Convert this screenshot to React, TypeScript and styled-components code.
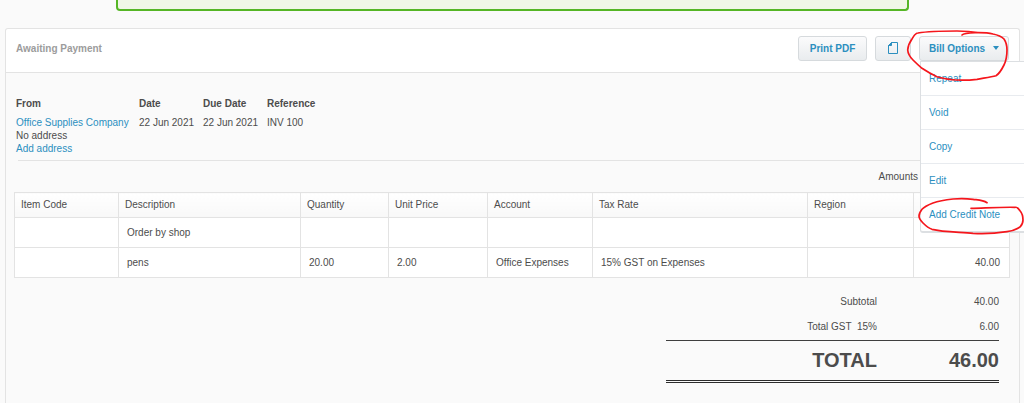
import React from "react";
import styled, { createGlobalStyle } from "styled-components";

const ink = "#4c4c4c";
const blue = "#2b8fbf";
const line = "#e3e3e3";

const GlobalStyle = createGlobalStyle`
  * { box-sizing: border-box; }
  body {
    margin: 0;
    background: #fafafa;
    color: ${ink};
    font: 10px/13px "Liberation Sans", Arial, sans-serif;
    overflow-x: hidden;
  }
`;

const Page = styled.div`
  position: relative;
  overflow: hidden;
  padding: 0 4px 0 5px;
`;

const Notice = styled.div`
  height: 11px;
  margin: 0 111px 17px;
  border: 2px solid #55b625;
  border-top: 0;
  border-radius: 0 0 4px 4px;
  background: #f0f7e6;
`;

const Panel = styled.section`
  border: 1px solid ${line};
  border-bottom: 0;
  border-radius: 3px 3px 0 0;
  background: #fafafa;
`;

const PanelHeader = styled.header`
  display: flex;
  align-items: center;
  justify-content: space-between;
  height: 44px;
  padding: 0 10px 4px;
  border-bottom: 1px solid ${line};
  border-radius: 3px 3px 0 0;
  background: #fff;
`;

const Status = styled.h1`
  margin: 0;
  color: #9c9c9c;
  font-size: 10px;
  line-height: 13px;
`;

const Actions = styled.div`
  display: flex;
  gap: 8px;
`;

const Button = styled.button<{ $width: number }>`
  display: flex;
  align-items: center;
  justify-content: center;
  gap: 8px;
  width: ${(p) => p.$width}px;
  height: 25px;
  padding: 0 0 1px;
  border: 1px solid #d6dadd;
  border-radius: 3px;
  background: linear-gradient(#fbfbfc, #e9ecee);
  color: ${blue};
  font: bold 10px/13px "Liberation Sans", Arial, sans-serif;
`;

const MenuAnchor = styled.div`
  position: relative;
`;

const Menu = styled.ul`
  position: absolute;
  top: 25px;
  left: 1px;
  width: 130px;
  margin: 0;
  padding: 0;
  border: 1px solid #dcdfe2;
  border-bottom-width: 2px;
  border-radius: 0 0 3px 3px;
  background: #fff;
  list-style: none;
`;

const MenuItem = styled.li`
  height: 34px;
  border-bottom: 1px solid #e8ebef;
  &:last-child {
    height: 33px;
    border-bottom: 0;
  }
`;

const MenuLink = styled.a`
  display: block;
  padding: 10px 8px;
  color: ${blue};
  text-decoration: none;
`;

const Body = styled.div`
  padding: 24px 9px 21px 8px;
`;

const Details = styled.dl`
  display: flex;
  gap: 9px;
  margin: 0 0 5px 2px;
`;

const Detail = styled.div<{ $width: number }>`
  width: ${(p) => p.$width}px;
  white-space: nowrap;
`;

const Term = styled.dt`
  margin-bottom: 6px;
  font-weight: bold;
`;

const Value = styled.dd`
  margin: 0;
`;

const TextLink = styled.a`
  color: ${blue};
  text-decoration: none;
`;

const Rule = styled.hr`
  height: 1px;
  margin: 0 0 0 4px;
  border: 0;
  background: ${line};
`;

const AmountsNote = styled.p`
  margin: 9px 0;
  padding-right: 92px;
  text-align: right;
`;

const Items = styled.table`
  width: 100%;
  table-layout: fixed;
  border-collapse: collapse;
  background: #fff;
`;

const HeadCell = styled.th`
  height: 25px;
  padding: 0 6px 2px;
  border: 1px solid ${line};
  background: linear-gradient(#fff, #f8f8f8);
  font-weight: normal;
  text-align: left;
`;

const Cell = styled.td<{ $right?: boolean }>`
  height: 30px;
  padding: 0 9px 0 8px;
  border: 1px solid ${line};
  text-align: ${(p) => (p.$right ? "right" : "left")};
`;

const Totals = styled.dl`
  width: 333px;
  margin: 11px 11px 0 auto;
`;

const TotalRow = styled.div`
  display: grid;
  grid-template-columns: 1fr 122px;
  padding: 6px 0;
  text-align: right;
  white-space: pre;
`;

const GrandTotal = styled(TotalRow)`
  margin-top: 1px;
  padding: 8px 0;
  border-top: 1px solid #3f3f3f;
  border-bottom: 3px double #2d2d2d;
  font-size: 20px;
  font-weight: bold;
  line-height: 23px;
`;

const TotalLabel = styled.dt``;

const Markup = styled.svg`
  position: absolute;
  top: 0;
  right: 0;
  pointer-events: none;
`;

const options = ["Repeat", "Void", "Copy", "Edit", "Add Credit Note"];

const columns = [
  { name: "Item Code", width: 104 },
  { name: "Description" },
  { name: "Quantity", width: 88 },
  { name: "Unit Price", width: 99 },
  { name: "Account", width: 105 },
  { name: "Tax Rate", width: 215 },
  { name: "Region", width: 106 },
  { name: "", width: 96 },
];

const rows = [
  ["", "Order by shop", "", "", "", "", "", ""],
  ["", "pens", "20.00", "2.00", "Office Expenses", "15% GST on Expenses", "", "40.00"],
];

export default function App() {
  return (
    <Page>
      <GlobalStyle />
      <Notice />
      <Panel>
        <PanelHeader>
          <Status>Awaiting Payment</Status>
          <Actions>
            <Button $width={69}>Print PDF</Button>
            <Button $width={36} aria-label="Files">
              <svg width="10" height="12" viewBox="0 0 10 12" fill="none" stroke={blue}>
                <path d="M3.5 .5H9.5V11.5H.5V3.5Z" />
                <path d="M3.5 .5V3.5H.5Z" fill={blue} />
              </svg>
            </Button>
            <MenuAnchor>
              <Button $width={90} aria-expanded="true">
                Bill Options
                <svg width="6" height="4" viewBox="0 0 6 4" fill={blue}>
                  <path d="M0 0H6L3 4Z" />
                </svg>
              </Button>
              <Menu>
                {options.map((name) => (
                  <MenuItem key={name}>
                    <MenuLink href="#">{name}</MenuLink>
                  </MenuItem>
                ))}
              </Menu>
            </MenuAnchor>
          </Actions>
        </PanelHeader>
        <Body>
          <Details>
            <Detail $width={114}>
              <Term>From</Term>
              <Value><TextLink href="#">Office Supplies Company</TextLink></Value>
              <Value>No address</Value>
              <Value><TextLink href="#">Add address</TextLink></Value>
            </Detail>
            <Detail $width={55}>
              <Term>Date</Term>
              <Value>22 Jun 2021</Value>
            </Detail>
            <Detail $width={55}>
              <Term>Due Date</Term>
              <Value>22 Jun 2021</Value>
            </Detail>
            <Detail $width={55}>
              <Term>Reference</Term>
              <Value>INV 100</Value>
            </Detail>
          </Details>
          <Rule />
          <AmountsNote>Amounts</AmountsNote>
          <Items>
            <colgroup>
              {columns.map((c, i) => <col key={i} width={c.width} />)}
            </colgroup>
            <thead>
              <tr>
                {columns.map((c, i) => <HeadCell key={i} scope="col">{c.name}</HeadCell>)}
              </tr>
            </thead>
            <tbody>
              {rows.map((row, r) => (
                <tr key={r}>
                  {row.map((text, i) => <Cell key={i} $right={i === 7}>{text}</Cell>)}
                </tr>
              ))}
            </tbody>
          </Items>
          <Totals>
            <TotalRow><TotalLabel>Subtotal</TotalLabel><Value>40.00</Value></TotalRow>
            <TotalRow><TotalLabel>{"Total GST  15%"}</TotalLabel><Value>6.00</Value></TotalRow>
            <GrandTotal><TotalLabel>TOTAL</TotalLabel><Value>46.00</Value></GrandTotal>
          </Totals>
        </Body>
      </Panel>
      <Markup width="124" height="240" viewBox="900 0 124 240" fill="none" stroke="#f5161c" strokeWidth="1.7" strokeLinecap="round" strokeLinejoin="round" aria-hidden="true">
        <path d="M962 35C963 34 969 33 975 32.700C982 32.500 989 33 993 34C998 35 1002 37 1004 39C1006 42 1007 46 1007 50C1007 56 1006 61 1004 65C1001 71 999 74 996 75.700C991 77 984 78 977 79.300C963 81 948 80 937 76.700C931 74 926 71 922 68.300C918 65 916 63 913 60C910 57 908 54 907.700 50C908 46 909 43 912 39C914 36 915 33 918 33C930 31 944 31 957 31C966 31 975 32 983 33" />
        <path d="M987 202.700C983 200 978 200 973 199.300C966 198.500 960 198.500 953 199C945 200 939 201 933 203C928 205 924 207 922 209.300C920 212 919 214 919 216C919 219 921 221 923 223C926 226 928 228 932 229.300C943 232 960 232 973 233.300C985 234 998 233 1007 231.700C1012 231 1017 229 1020 227C1022 225 1023 223 1023 220C1023 216 1022 213 1020 210.700C1019 209 1017 207 1015 207.300C1000 207 985 208 971 208.300" />
      </Markup>
    </Page>
  );
}
